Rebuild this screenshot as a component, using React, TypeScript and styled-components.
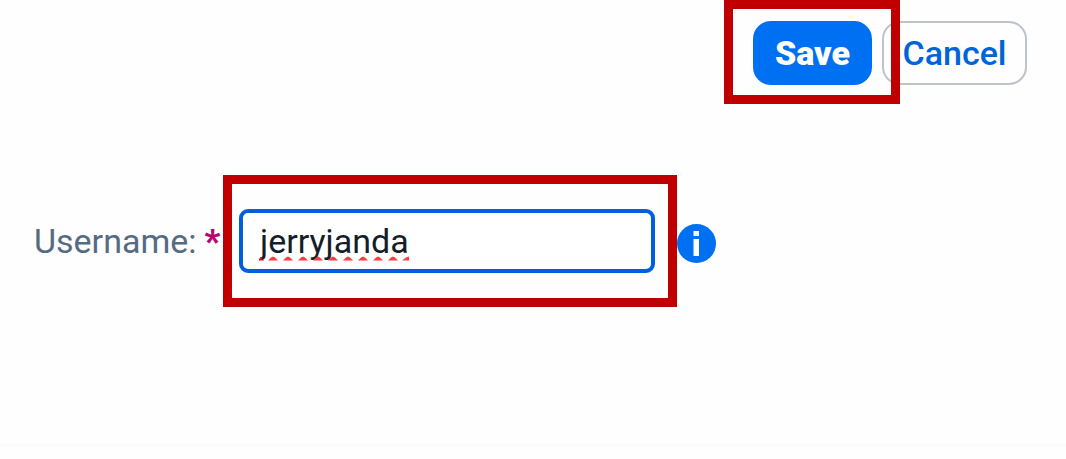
import React from "react";
import styled, { createGlobalStyle } from "styled-components";

const GlobalStyle = createGlobalStyle`
  *, *::before, *::after { box-sizing: border-box; }
  body {
    margin: 0;
    background: #fefefe;
    font-family: Roboto, "Liberation Sans", sans-serif;
    font-size: 34px;
    line-height: 40px;
  }
`;

const Page = styled.main`
  display: flex;
  flex-direction: column;
  min-height: 100vh;
`;

const Toolbar = styled.header`
  display: flex;
  justify-content: flex-end;
  gap: 10px;
  padding: 21px 39px 0 34px;
`;

const Highlighted = styled.div`
  position: relative;
  display: flex;
`;

const HighlightFrame = styled.span<{ $inset: string }>`
  position: absolute;
  z-index: 1;
  inset: ${(p) => p.$inset};
  border: 9px solid #c00000;
  pointer-events: none;
`;

const Button = styled.button<{ $primary?: boolean }>`
  min-width: ${(p) => (p.$primary ? 119 : 145)}px;
  height: 64px;
  padding: 0 16px;
  border: 2px solid ${(p) => (p.$primary ? "#0070f2" : "#bcc3ca")};
  border-radius: 18px;
  background: ${(p) => (p.$primary ? "#0070f2" : "#fefefe")};
  color: ${(p) => (p.$primary ? "#ffffff" : "#0064d9")};
  font-family: inherit;
  font-size: 34px;
  font-weight: ${(p) => (p.$primary ? 900 : 500)};
  line-height: 40px;
`;

const FormRow = styled.form`
  display: flex;
  align-items: center;
  padding: 124px 34px 0;
`;

const Label = styled.label`
  flex: none;
  width: 205px;
  color: #556b82;
  white-space: nowrap;
`;

const Required = styled.span`
  margin-left: 8px;
  color: #ba066c;
  font-weight: 900;
`;

const Field = styled(Highlighted)`
  flex: 0 1 416px;
  min-width: 0;
`;

const TextInput = styled.input`
  width: 100%;
  height: 64px;
  padding: 0 17px;
  border: 4px solid #0060dc;
  border-radius: 9px;
  outline: none;
  background: #ffffff;
  color: #131e29;
  font-family: inherit;
  font-size: 34px;
  line-height: 40px;
`;

const SpellingMark = styled.svg`
  position: absolute;
  left: 20px;
  top: 47px;
  pointer-events: none;
`;

const InfoButton = styled.button`
  display: flex;
  flex: none;
  margin: 4px 0 0 22px;
  padding: 0;
  border: 0;
  background: none;
`;

const Divider = styled.hr`
  width: 100%;
  height: 2px;
  margin: auto 0 13px;
  border: 0;
  background: #fbfbfb;
`;

const peaks = [14, 29, 44, 59, 74, 89, 104, 119, 134];

export default function App() {
  return (
    <>
      <GlobalStyle />
      <Page>
        <Toolbar>
          <Highlighted>
            <Button type="submit" form="user" $primary>Save</Button>
            <HighlightFrame $inset="-21px -28px -19px -29px" />
          </Highlighted>
          <Button type="button">Cancel</Button>
        </Toolbar>
        <FormRow id="user" onSubmit={(e) => e.preventDefault()}>
          <Label htmlFor="username">
            Username:<Required>*</Required>
          </Label>
          <Field>
            <TextInput id="username" type="text" defaultValue="jerryjanda" spellCheck={false} required />
            <SpellingMark width="152" height="5" viewBox="0 0 152 5" aria-hidden="true">
              <path d="M0 4.5 L0 3 L2 1 L5 4.5 Z" fill="#d81010" />
              {peaks.map((x) => (
                <path key={x} d={`M${x - 5} 4.5 L${x - 2} 1.5 L${x} 0.5 L${x + 2} 1.5 L${x + 5} 4.5 Z`} fill="#ff3b3b" />
              ))}
              <path d="M143 4.5 L147 1.5 L150 0.5 L150 4.5 Z" fill="#ff3b3b" />
            </SpellingMark>
            <HighlightFrame $inset="-34px -22px -34px -16px" />
          </Field>
          <InfoButton type="button" aria-label="Information">
            <svg width="40" height="40" viewBox="0 0 40 40" aria-hidden="true">
              <circle cx="19.5" cy="20.5" r="19.5" fill="#0070f2" />
              <path d="M16.5 8h5.5v5h-5.500zM16.500 16h5.500v17h-5.500z" fill="#ffffff" />
            </svg>
          </InfoButton>
        </FormRow>
        <Divider />
      </Page>
    </>
  );
}
